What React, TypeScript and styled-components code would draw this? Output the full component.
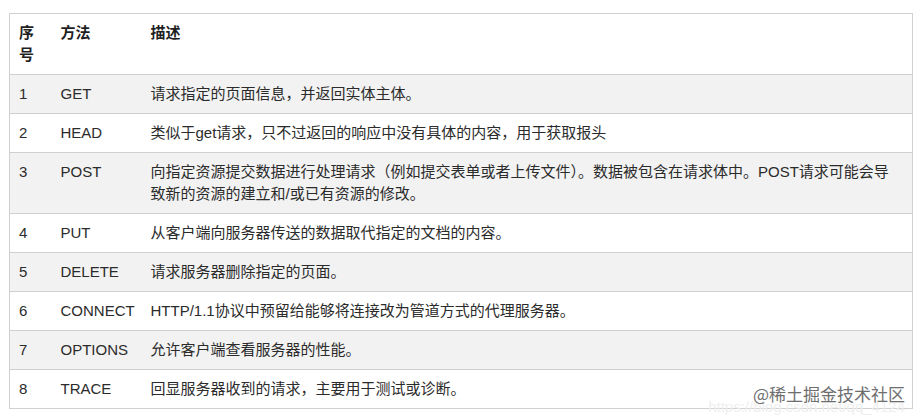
import styled, {createGlobalStyle} from 'styled-components';

const GlobalStyle = createGlobalStyle`
  html, body {
    margin: 0;
    padding: 0;
    background: #ffffff;
  }
`;

const Page = styled('div')`
  position: relative;
  width: 921px;
  height: 418px;
  box-sizing: border-box;
  padding: 13px 9px 0 9px;
  font-family: 'Liberation Sans', 'Noto Sans CJK SC', sans-serif;
  font-size: 15px;
  color: #2b2b2b;
  overflow: hidden;
`;

const Table = styled('table')`
  width: 904px;
  border-collapse: collapse;
  border: 1px solid #d0d0d0;
  table-layout: fixed;
`;

const Row = styled('tr')<{$shaded?: boolean}>`
  background: ${(p) => (p.$shaded ? '#f2f2f2' : '#ffffff')};
  border-top: 1px solid #d0d0d0;
`;

const Head = styled('th')`
  text-align: left;
  vertical-align: top;
  font-weight: bold;
  line-height: 22px;
  padding: 8px 9px 8px 9px;
  color: #1f1f1f;
`;

const Cell = styled('td')`
  vertical-align: top;
  line-height: 22px;
  padding: 8px 9px 8px 9px;
`;

const Watermark = styled('div')`
  position: absolute;
  right: 16px;
  bottom: 14px;
  text-align: right;
`;

const Brand = styled('div')`
  position: relative;
  z-index: 1;
  font-family: 'Noto Sans CJK SC', sans-serif;
  font-size: 17px;
  line-height: 20px;
  color: #6e6e6e;
  text-shadow: 0 0 2px #ffffff, 0 0 2px #ffffff;
`;

const Url = styled('div')`
  position: absolute;
  right: 0;
  top: 14px;
  font-family: 'Liberation Sans', sans-serif;
  font-size: 15px;
  color: #efefef;
  white-space: nowrap;
`;

type Method = {
  name: string;
  description: string;
};

const methods: Method[] = [
  {name: 'GET', description: '请求指定的页面信息，并返回实体主体。'},
  {name: 'HEAD', description: '类似于get请求，只不过返回的响应中没有具体的内容，用于获取报头'},
  {
    name: 'POST',
    description:
      '向指定资源提交数据进行处理请求（例如提交表单或者上传文件）。数据被包含在请求体中。POST请求可能会导致新的资源的建立和/或已有资源的修改。',
  },
  {name: 'PUT', description: '从客户端向服务器传送的数据取代指定的文档的内容。'},
  {name: 'DELETE', description: '请求服务器删除指定的页面。'},
  {name: 'CONNECT', description: 'HTTP/1.1协议中预留给能够将连接改为管道方式的代理服务器。'},
  {name: 'OPTIONS', description: '允许客户端查看服务器的性能。'},
  {name: 'TRACE', description: '回显服务器收到的请求，主要用于测试或诊断。'},
];

const App = () => {
  return (
    <Page>
      <GlobalStyle />
      <Table>
        <colgroup>
          <col style={{width: '42px'}} />
          <col style={{width: '90px'}} />
          <col />
        </colgroup>
        <thead>
          <Row>
            <Head>序号</Head>
            <Head>方法</Head>
            <Head>描述</Head>
          </Row>
        </thead>
        <tbody>
          {methods.map((item, i) => (
            <Row key={item.name} $shaded={i % 2 === 0}>
              <Cell>{i + 1}</Cell>
              <Cell>{item.name}</Cell>
              <Cell>{item.description}</Cell>
            </Row>
          ))}
        </tbody>
      </Table>
      <Watermark>
        <Url>https://blog.csdn.net/qq_4124</Url>
        <Brand>@稀土掘金技术社区</Brand>
      </Watermark>
    </Page>
  );
};

export default App;
